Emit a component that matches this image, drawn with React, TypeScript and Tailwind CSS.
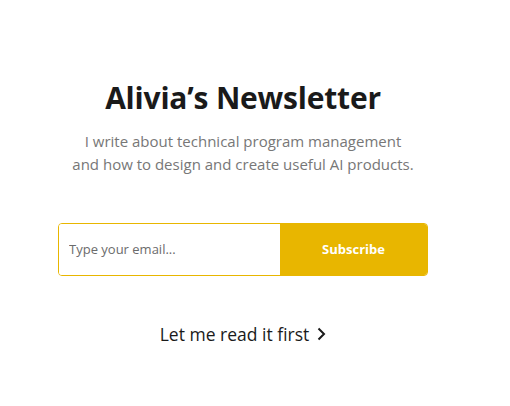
import React from "react";

export default function App() {
  return (
    <div className="w-[510px] h-[406px] bg-white" style={{ fontFamily: '"Open Sans", "Noto Sans", sans-serif' }}>
      <div className="w-[486px] flex flex-col items-center pt-[78px]">
        <h1 className="text-[30px] font-bold text-[#1a1a1a] leading-[40px] tracking-[-0.2px]">Alivia’s Newsletter</h1>
        <p className="mt-[12px] text-center text-[15px] leading-[23px] text-[#777777]">
          I write about technical program management
          <br />
          and how to design and create useful AI products.
        </p>
        <form className="mt-[47px] flex w-[370px] h-[53px] rounded-[4px] border border-[#e8b600] overflow-hidden">
          <input
            type="email"
            placeholder="Type your email..."
            className="flex-1 min-w-0 px-[10px] text-[13px] text-[#333] placeholder:text-[#6b6b6b] outline-none bg-white"
          />
          <button type="button" className="w-[147px] bg-[#e8b600] text-white font-bold text-[13px]">
            Subscribe
          </button>
        </form>
        <a className="mt-[45px] flex items-center gap-[7px] text-[17.5px] text-[#1a1a1a]">
          Let me read it first
          <svg width="10" height="16" viewBox="0 0 10 16" fill="none" stroke="#1a1a1a" strokeWidth="2">
            <path d="M2.5 2.5 L8 8 L2.5 13.5" />
          </svg>
        </a>
      </div>
    </div>
  );
}
